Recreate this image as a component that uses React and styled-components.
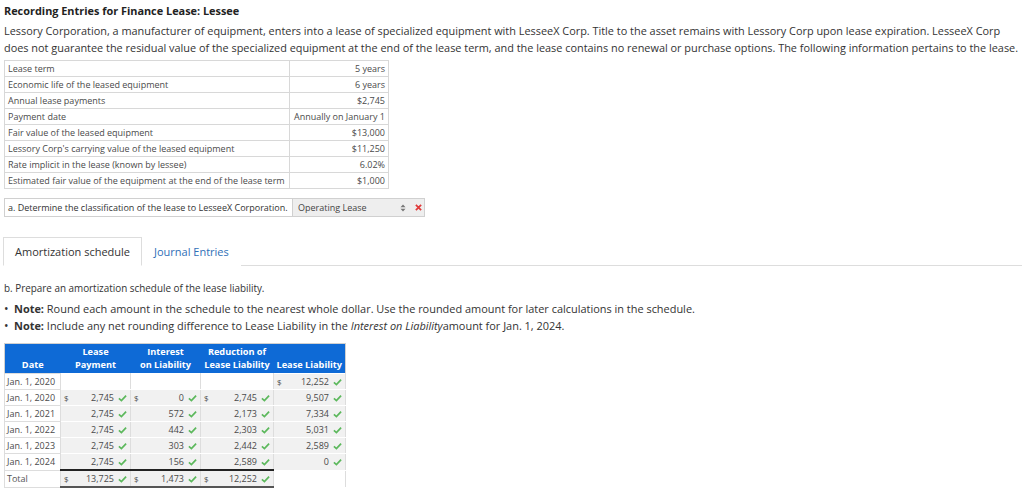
import styled, { createGlobalStyle } from "styled-components";

const GlobalStyle = createGlobalStyle`
  body {
    margin: 0;
    background: #fff;
    font-family: "Open Sans", "Liberation Sans", sans-serif;
    color: #333;
  }
`;

const Page = styled.div`
  padding: 2px 2px 0 4px;
  width: 1024px;
  box-sizing: border-box;
`;

const Title = styled.h1`
  margin: 0;
  font-size: 10.9px;
  font-weight: 700;
  line-height: 17px;
  color: #222;
`;

const Intro = styled.p`
  margin: 3px 0 0;
  font-size: 10.9px;
  line-height: 17px;
  color: #333;
`;

const InfoTable = styled.table`
  margin-top: 4px;
  border-collapse: collapse;
  width: 385px;
  font-size: 9px;
  color: #4a4a4a;
  td {
    border: 1px solid #d8d8d8;
    height: 15px;
    padding: 0 3px;
    white-space: nowrap;
  }
  td:last-child {
    text-align: right;
    width: 92px;
  }
`;

const ClassRow = styled.div`
  display: flex;
  align-items: stretch;
  margin-top: 9px;
  width: 419px;
  height: 17px;
  border: 1px solid #d0d0d0;
  font-size: 9px;
  color: #333;
`;

const ClassLabel = styled.div`
  display: flex;
  align-items: center;
  padding: 0 2px 0 3px;
  width: 282px;
  border-right: 1px solid #d0d0d0;
  white-space: nowrap;
`;

const Select = styled.div`
  flex: 1;
  display: flex;
  align-items: center;
  justify-content: space-between;
  padding: 0 6px 0 5px;
  background: #eee;
  color: #444;
`;

const WrongMark = styled.div`
  display: flex;
  align-items: center;
  justify-content: center;
  width: 12px;
  background: #eee;
`;

const Tabs = styled.div`
  display: flex;
  align-items: flex-end;
  margin-top: 18px;
  height: 30px;
  border-bottom: 1px solid #ddd;
`;

const Tab = styled.div`
  height: 29px;
  display: flex;
  align-items: center;
  padding: 0 11px 0 11px;
  margin-bottom: -1px;
  font-size: 11px;
  white-space: nowrap;
  box-sizing: border-box;
  color: ${(p) => (p.active ? "#333" : "#2f6fb7")};
  background: #fff;
  border: 1px solid ${(p) => (p.active ? "#ddd" : "transparent")};
  border-bottom-color: ${(p) => (p.active ? "#fff" : "transparent")};
  ${(p) => p.active && "margin-left: -1px;"}
`;

const PartB = styled.p`
  margin: 15px 0 0;
  font-size: 9.9px;
  line-height: 14px;
  color: #333;
`;

const Notes = styled.ul`
  margin: 5px 0 0;
  padding: 0;
  list-style: none;
  font-size: 10.95px;
  line-height: 17px;
  color: #333;
  li::before {
    content: "•";
    display: inline-block;
    width: 10px;
    font-size: 12px;
    color: #333;
  }
  em {
    font-style: italic;
  }
`;

const Schedule = styled.table`
  margin-top: 9px;
  border-collapse: collapse;
  font-size: 9px;
  color: #4a4a4a;
  border: 1px solid #d0d0d0;
  th {
    background: #0e6ad6;
    color: #fff;
    font-weight: 700;
    font-size: 9.2px;
    line-height: 13px;
    padding: 1px 1px 2px;
    vertical-align: bottom;
    text-align: center;
    white-space: nowrap;
  }
`;

const DateCell = styled.td`
  width: 51px;
  height: 15px;
  padding: 0 2px;
  white-space: nowrap;
  border: 1px solid #ddd;
  background: #fff;
  color: ${(p) => (p.total ? "#555" : "#4a4a4a")};
`;

const MoneyCell = styled.td`
  width: ${(p) => p.w}px;
  height: 15px;
  padding: 0 3px 0 3px;
  white-space: nowrap;
  background: ${(p) => (p.blank ? "#fff" : "#f1f1f1")};
  border: 1px solid #fff;
  border-left: 1px solid #ddd;
  border-right: 1px solid #ddd;
  ${(p) => p.totalTop && "border-top: 2px solid #222;"}
  ${(p) => p.totalBottom && "border-bottom: 2px solid #555;"}
`;

const CellInner = styled.div`
  display: flex;
  align-items: center;
`;

const Dollar = styled.span`
  width: 10px;
  font-size: 8px;
`;

const Amount = styled.span`
  flex: 1;
  text-align: right;
`;

const CheckBox = styled.span`
  width: 13px;
  display: flex;
  justify-content: flex-end;
`;

function Check() {
  return (
    <svg width="9" height="8" viewBox="0 0 10 8">
      <path d="M1 4.3 L3.8 6.8 L9 1.3" fill="none" stroke="#5cb85c" strokeWidth="1.9" />
    </svg>
  );
}

function Money({ sign, value, w, blank, totalTop, totalBottom }) {
  return (
    <MoneyCell w={w} blank={blank} totalTop={totalTop} totalBottom={totalBottom}>
      {!blank && (
        <CellInner>
          <Dollar>{sign ? "$" : ""}</Dollar>
          <Amount>{value}</Amount>
          <CheckBox>
            <Check />
          </CheckBox>
        </CellInner>
      )}
    </MoneyCell>
  );
}

const info = [
  ["Lease term", "5 years"],
  ["Economic life of the leased equipment", "6 years"],
  ["Annual lease payments", "$2,745"],
  ["Payment date", "Annually on January 1"],
  ["Fair value of the leased equipment", "$13,000"],
  ["Lessory Corp's carrying value of the leased equipment", "$11,250"],
  ["Rate implicit in the lease (known by lessee)", "6.02%"],
  ["Estimated fair value of the equipment at the end of the lease term", "$1,000"],
];

const rows = [
  ["Jan. 1, 2020", "2,745", "0", "2,745", "9,507", true],
  ["Jan. 1, 2021", "2,745", "572", "2,173", "7,334"],
  ["Jan. 1, 2022", "2,745", "442", "2,303", "5,031"],
  ["Jan. 1, 2023", "2,745", "303", "2,442", "2,589"],
  ["Jan. 1, 2024", "2,745", "156", "2,589", "0"],
];

export default function App() {
  return (
    <>
      <GlobalStyle />
      <Page>
        <Title>Recording Entries for Finance Lease: Lessee</Title>
        <Intro>
          Lessory Corporation, a manufacturer of equipment, enters into a lease of specialized equipment with
          LesseeX Corp. Title to the asset remains with Lessory Corp upon lease expiration. LesseeX Corp does not
          guarantee the residual value of the specialized equipment at the end of the lease term, and the lease
          contains no renewal or purchase options. The following information pertains to the lease.
        </Intro>
        <InfoTable>
          <tbody>
            {info.map(([k, v]) => (
              <tr key={k}>
                <td>{k}</td>
                <td>{v}</td>
              </tr>
            ))}
          </tbody>
        </InfoTable>
        <ClassRow>
          <ClassLabel>a. Determine the classification of the lease to LesseeX Corporation.</ClassLabel>
          <Select>
            <span>Operating Lease</span>
            <svg width="6" height="8" viewBox="0 0 6 8">
              <path d="M0.5 3.3 L3 0.5 L5.5 3.3 Z M0.5 4.7 L3 7.5 L5.5 4.7 Z" fill="#777" />
            </svg>
          </Select>
          <WrongMark>
            <svg width="7" height="7" viewBox="0 0 8 8">
              <path d="M1 1 L7 7 M7 1 L1 7" stroke="#e03a3a" strokeWidth="2" />
            </svg>
          </WrongMark>
        </ClassRow>
        <Tabs>
          <Tab active>Amortization schedule</Tab>
          <Tab>Journal Entries</Tab>
        </Tabs>
        <PartB>b. Prepare an amortization schedule of the lease liability.</PartB>
        <Notes>
          <li>
            <b>Note:</b> Round each amount in the schedule to the nearest whole dollar. Use the rounded amount for
            later calculations in the schedule.
          </li>
          <li>
            <b>Note:</b> Include any net rounding difference to Lease Liability in the <em>Interest on Liability</em>
            amount for Jan. 1, 2024.
          </li>
        </Notes>
        <Schedule>
          <thead>
            <tr>
              <th>Date</th>
              <th>
                Lease
                <br />
                Payment
              </th>
              <th>
                Interest
                <br />
                on Liability
              </th>
              <th>
                Reduction of
                <br />
                Lease Liability
              </th>
              <th>Lease Liability</th>
            </tr>
          </thead>
          <tbody>
            <tr>
              <DateCell>Jan. 1, 2020</DateCell>
              <Money w={63} blank />
              <Money w={63} blank />
              <Money w={66} blank />
              <Money w={65} sign value="12,252" />
            </tr>
            {rows.map(([d, p, i, r, l, s]) => (
              <tr key={d + l}>
                <DateCell>{d}</DateCell>
                <Money w={63} sign={s} value={p} />
                <Money w={63} sign={s} value={i} />
                <Money w={66} sign={s} value={r} />
                <Money w={65} value={l} />
              </tr>
            ))}
            <tr>
              <DateCell total>Total</DateCell>
              <Money w={63} sign value="13,725" totalTop totalBottom />
              <Money w={63} sign value="1,473" totalTop totalBottom />
              <Money w={66} sign value="12,252" totalTop totalBottom />
              <Money w={65} blank />
            </tr>
          </tbody>
        </Schedule>
      </Page>
    </>
  );
}
